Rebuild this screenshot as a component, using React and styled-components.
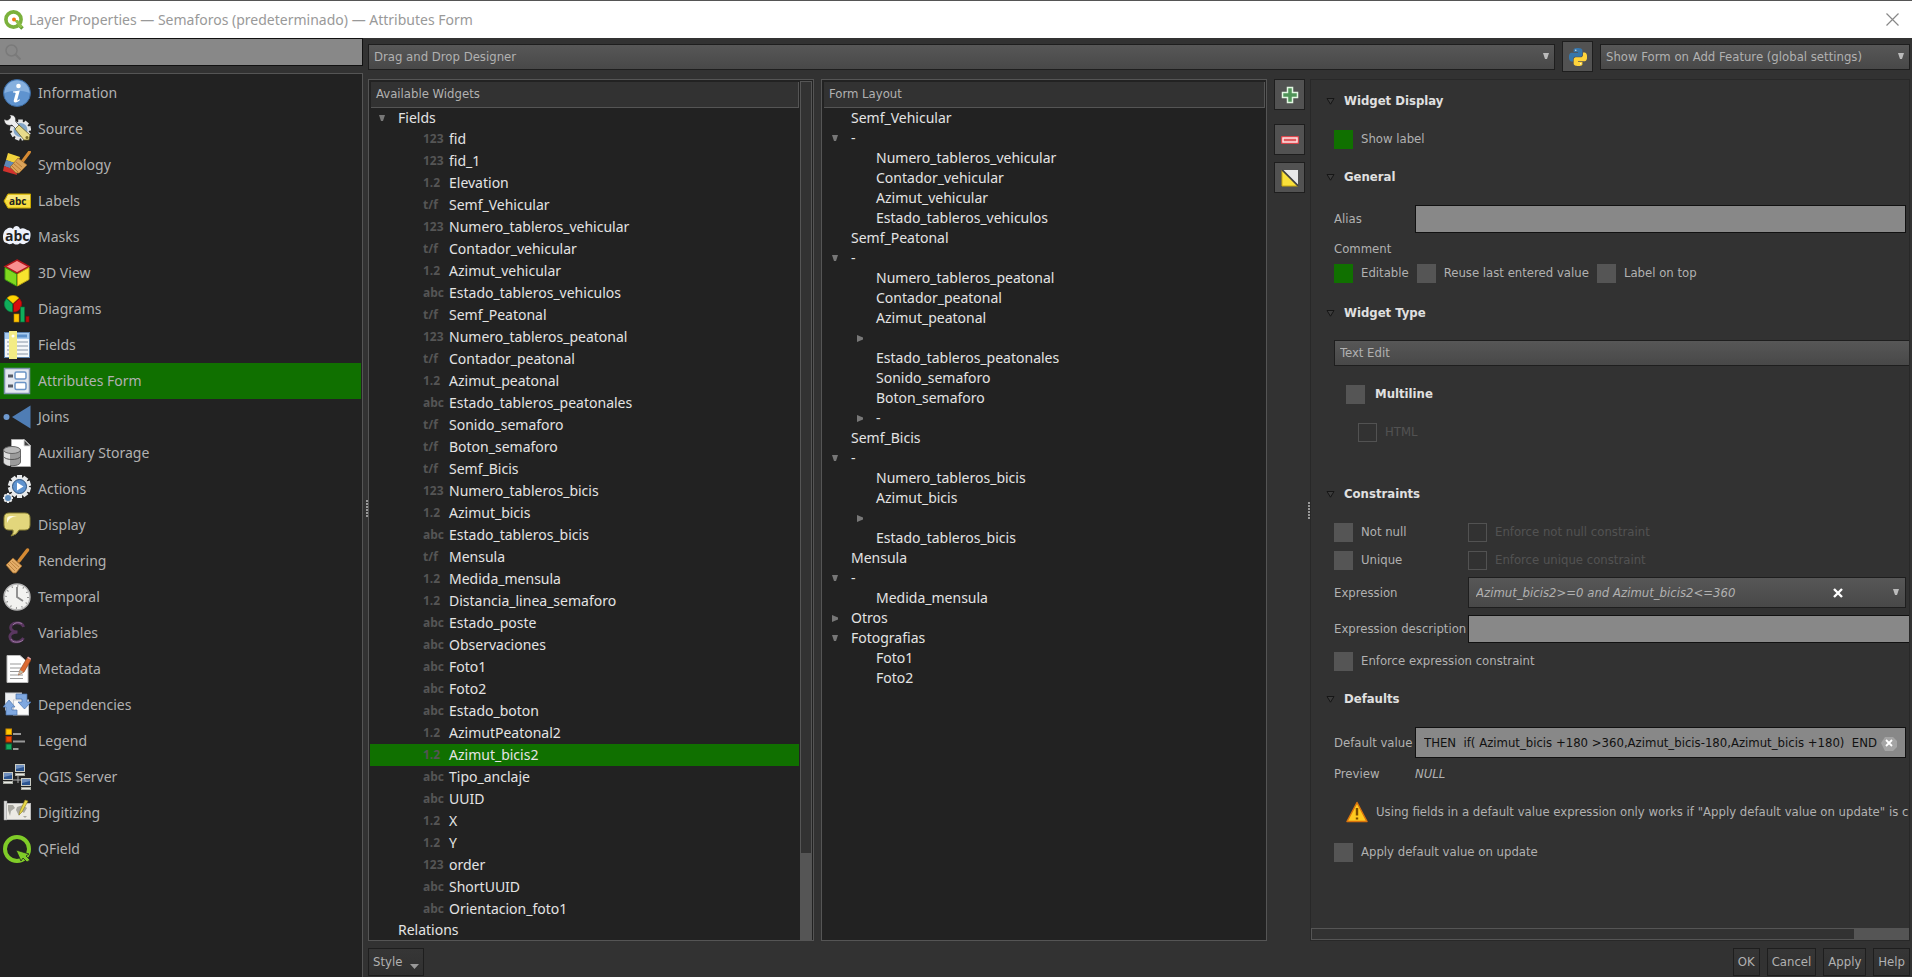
import React from "react";
import styled, { createGlobalStyle, css } from "styled-components";

const UI = `"Noto Sans", "Open Sans", sans-serif`;
const SMALL = `"DejaVu Sans Condensed", "DejaVu Sans", sans-serif`;

const GlobalStyle = createGlobalStyle`
  *, *::before, *::after { box-sizing: border-box; }
  body { margin: 0; background: #323232; }
  button, input, select { font: inherit; color: inherit; margin: 0; border-radius: 0; }
  ul { list-style: none; margin: 0; padding: 0; }
  svg { flex-shrink: 0; }
`;

/* ---------- window frame ---------- */

const Window = styled.div`
  display: flex;
  flex-direction: column;
  min-height: 100vh;
  background: #323232;
  color: #b1b1b1;
  font: 13px/20px ${SMALL};
`;

const TitleBar = styled.header`
  display: flex;
  align-items: center;
  gap: 5px;
  height: 38px;
  padding: 0 12px 0 4px;
  border-top: 1px solid #555;
  background: #fff;
  color: #999;
  font: 14px/20px ${UI};
`;

const Title = styled.h1`
  flex: 1;
  margin: 0;
  font: inherit;
`;

const CloseButton = styled.button`
  display: flex;
  padding: 0;
  border: 0;
  background: none;
`;

const Body = styled.div`
  display: flex;
  flex: 1;
  min-height: 0;
`;

/* ---------- sidebar ---------- */

const Sidebar = styled.aside`
  display: flex;
  flex-direction: column;
  gap: 7px;
  flex: 0 0 363px;
`;

const SearchBox = styled.label`
  display: flex;
  align-items: center;
  height: 28px;
  padding-left: 5px;
  border: 1px solid #111;
  border-left: 0;
  background: #888;
`;

const SearchInput = styled.input`
  flex: 1;
  border: 0;
  outline: 0;
  background: none;
`;

const Nav = styled.nav`
  flex: 1;
  padding-top: 1px;
  padding-right: 1px;
  border: solid #555;
  border-width: 1px 1px 0 0;
  background: #222;
`;

const NavItem = styled.button`
  display: flex;
  align-items: center;
  gap: 7px;
  width: 100%;
  height: 36px;
  padding: 0 3px;
  border: 0;
  background: ${(p) => (p.$active ? "#107000" : "transparent")};
  font: 14px/20px ${UI};
  text-align: left;
`;

const Handle = styled.div`
  display: flex;
  align-items: center;
  justify-content: flex-end;
  flex: 0 0 5px;
  svg { margin-top: 2px; }
`;

/* ---------- main area ---------- */

const Main = styled.main`
  display: flex;
  flex-direction: column;
  flex: 1;
  min-width: 0;
  padding-right: 2px;
`;

const TopBar = styled.div`
  display: flex;
  align-items: center;
  gap: 7px;
  margin: 3px 0 7px;
`;

const comboFace = css`
  border: 1px solid #1e1e1e;
  background: linear-gradient(#575757, #484848);
`;

const ComboWrap = styled.div`
  position: relative;
  display: flex;
  flex: ${(p) => p.$flex || "1"};
  min-width: 0;
  svg {
    position: absolute;
    top: 50%;
    right: 6px;
    margin-top: -4px;
    pointer-events: none;
  }
`;

const SelectBox = styled.select`
  ${comboFace}
  appearance: none;
  width: 100%;
  height: 26px;
  padding: 0 5px;
  ${(p) => p.$cut && css`border-right: 0;`}
`;

const ToolButton = styled.button`
  display: flex;
  align-items: center;
  justify-content: center;
  width: 31px;
  height: 31px;
  padding: 0;
  border: 1px solid #1e1e1e;
  background: #525252;
`;

const Workspace = styled.div`
  display: flex;
  flex: 1;
  min-height: 0;
`;

const Trees = styled.div`
  display: flex;
  gap: 7px;
  flex: 937 1 0;
  min-width: 0;
`;

const TreePanel = styled.section`
  display: flex;
  flex: 1;
  gap: 1px;
  min-width: 0;
  padding: 1px 1px 0;
  border: 1px solid #555;
  background: #222;
`;

const TreeColumn = styled.div`
  flex: 1;
  min-width: 0;
`;

const TreeHeader = styled.h2`
  height: 26px;
  margin: 1px 0 0 1px;
  padding: 0 5px;
  border: solid #555;
  border-width: 0 1px 1px 0;
  background: #323232;
  font: inherit;
  line-height: 24px;
`;

const TreeRow = styled.li`
  display: flex;
  align-items: center;
  height: ${(p) => (p.$type ? 22 : 20)}px;
  padding-left: ${(p) => 9 + p.$level * 25}px;
  background: ${(p) => (p.$selected ? "#107000" : "transparent")};
  color: #e4e4e4;
  font: 14px/20px ${UI};
  white-space: pre;
`;

const Expander = styled.span`
  display: flex;
  width: 19px;
`;

const TypeTag = styled.span`
  width: 26px;
  color: #555;
  font: bold 12px/20px "Open Sans", sans-serif;
`;

const VScroll = styled.div`
  display: flex;
  flex-direction: column;
  justify-content: flex-end;
  width: 12px;
  border: 1px solid #555;
  background: #323232;
`;

const VThumb = styled.div`
  height: 10%;
  background: #555;
`;

const ToolColumn = styled.div`
  display: flex;
  flex-direction: column;
  gap: 7px;
`;

const AddButton = styled(ToolButton)`
  margin-bottom: 7px;
`;

/* ---------- properties ---------- */

const Properties = styled.section`
  display: flex;
  flex-direction: column;
  flex: 598 1 0;
  min-width: 0;
  border: 1px solid #282828;
`;

const Scroller = styled.div`
  flex: 1;
  padding: 11px 0 0 15px;
  overflow: hidden;
`;

const Group = styled.fieldset`
  min-width: 0;
  margin: ${(p) => p.$top || 0}px 0 0;
  padding: 0 0 0 8px;
  border: 0;
`;

const GroupTitle = styled.legend`
  display: flex;
  align-items: center;
  gap: 9px;
  margin-left: -8px;
  padding: 0;
  color: #e0e0e0;
  font-weight: bold;
`;

const Line = styled.div`
  display: flex;
  align-items: center;
  gap: ${(p) => p.$gap || 0}px;
  min-height: ${(p) => p.$h || 28}px;
  margin-top: ${(p) => p.$top || 0}px;
  margin-left: ${(p) => p.$indent || 0}px;
  white-space: nowrap;
`;

const Caption = styled.label`
  flex: 0 0 ${(p) => p.$w}px;
`;

const CheckLabel = styled.label`
  display: flex;
  align-items: center;
  gap: ${(p) => (p.$bold ? 10 : 8)}px;
  width: ${(p) => (p.$w ? `${p.$w}px` : "auto")};
  ${(p) => p.$bold && css`font-weight: bold; color: #e0e0e0;`}
  ${(p) => p.$off && css`color: #525252;`}
`;

const Box = styled.input`
  appearance: none;
  width: 19px;
  height: 19px;
  background: #555;
  &:checked { background: #107000; }
  &:disabled { background: none; border: 1px solid #525252; }
`;

const Field = styled.input`
  flex: 1;
  min-width: 0;
  height: 28px;
  margin-right: ${(p) => (p.$cut ? 0 : 3)}px;
  padding: 0 5px;
  border: 1px solid #111;
  ${(p) => p.$cut && css`border-right: 0;`}
  outline: 0;
  background: #888;
`;

const ExprCombo = styled.div`
  ${comboFace}
  display: flex;
  align-items: center;
  flex: 1;
  height: 31px;
  margin-right: 3px;
  padding: 0 6px 0 7px;
`;

const ExprInput = styled.input`
  flex: 1;
  min-width: 0;
  padding: 0;
  border: 0;
  outline: 0;
  background: none;
  font-style: italic;
`;

const IconButton = styled.button`
  display: flex;
  margin-right: ${(p) => p.$mr || 0}px;
  padding: 0;
  border: 0;
  background: none;
`;

const ValueBox = styled.div`
  display: flex;
  align-items: center;
  flex: 1;
  min-width: 0;
  height: 31px;
  margin-right: 3px;
  padding: 0 8px;
  border: 1px solid #111;
  background: #888;
  color: #111;
`;

const ValueInput = styled(ExprInput)`
  font-style: normal;
`;

const HScroll = styled.div`
  display: flex;
  justify-content: flex-end;
  height: 12px;
  border: 1px solid #555;
`;

const HThumb = styled.div`
  width: 9%;
  background: #555;
`;

/* ---------- footer ---------- */

const Footer = styled.footer`
  display: flex;
  gap: 7px;
  margin: 7px 0 1px;
`;

const PushButton = styled.button`
  display: flex;
  align-items: center;
  gap: 8px;
  height: 28px;
  padding: 0 4px;
  border: 1px solid #1e1e1e;
  background: linear-gradient(#363636, #303030);
  svg { margin-top: 8px; }
`;

const Spacer = styled.div`
  flex: 1;
`;

/* ---------- drawings ---------- */

const Icon = ({ size = 28, box = 28, children }) => (
  <svg width={size} height={size} viewBox={`0 0 ${box} ${box}`} aria-hidden="true">
    {children}
  </svg>
);

const Down = ({ color = "#888" }) => (
  <svg width="6" height="7" viewBox="0 0 6 7" aria-hidden="true">
    <path d="M0 0h6L4 6H2z" fill={color} />
  </svg>
);

const Right = () => (
  <svg width="6" height="7" viewBox="0 0 6 7" aria-hidden="true">
    <path d="M0 0L6 2.500v2L0 7z" fill="#777" />
  </svg>
);

const GroupArrow = () => (
  <svg width="9" height="7" viewBox="0 0 9 7" aria-hidden="true">
    <path d="M1 .5h7L4.500 6.200z" fill="#3c3c3c" stroke="#161616" />
  </svg>
);

const Grip = () => (
  <svg width="2" height="18" viewBox="0 0 2 18" aria-hidden="true">
    <path d="M1 0v18" stroke="#999" strokeWidth="2" strokeDasharray="2 1" />
  </svg>
);

const Cross = ({ size, color, width }) => (
  <svg width={size} height={size} viewBox="0 0 10 10" aria-hidden="true">
    <path d="M1 1l8 8M9 1l-8 8" stroke={color} strokeWidth={width} />
  </svg>
);

const gear = (cx, cy, r, fill, teeth = 9) => (
  <g fill={fill}>
    {Array.from({ length: teeth }, (_, i) => (
      <rect
        key={i}
        x={cx - r * 0.22}
        y={cy - r}
        width={r * 0.44}
        height={r}
        transform={`rotate(${(360 / teeth) * i} ${cx} ${cy})`}
      />
    ))}
    <circle cx={cx} cy={cy} r={r * 0.82} />
  </g>
);

const monitor = (x, y) => (
  <g>
    <rect x={x} y={y} width="10" height="8" fill="#c9ccc4" />
    <rect x={x + 1} y={y + 1} width="8" height="6" fill="#2c5591" />
    <path d={`M${x + 1} ${y + 1}h8v2l-8 2z`} fill="#6f8fbe" />
    <rect x={x} y={y + 9} width="10" height="3" fill="#a9aca4" />
    <rect x={x + 1} y={y + 10} width="8" height="1" fill="#e8e8e4" />
  </g>
);

const icons = {
  info: (
    <Icon>
      <circle cx="14" cy="14" r="13.500" fill="#5f93cf" stroke="#3c699e" />
      <path d="M1.500 14a12.500 12.500 0 0 1 25 0c-7-3-17-3-25 0z" fill="#86b0df" />
      <circle cx="15.500" cy="7" r="2.300" fill="#fff" />
      <path d="M10 12.500l6.800-1-2.600 9.400c-.2.900.8.700 2.300-.6l.5.700c-2.500 2.900-6.900 3.700-6.200.3l1.900-7.100c0-.6-.9-.7-2.700-.8z" fill="#fff" />
    </Icon>
  ),
  source: (
    <Icon>
      {gear(17.5, 15, 10.5, "#e4e6e8")}
      <circle cx="17.500" cy="15" r="7" fill="#83a6c9" />
      <path d="M1 4c2 1.500 4 1.500 5.500 0S8 .8 6 0c5-.8 7.500 2.500 6.500 6.500L17 11l-3.500 3.500L9 10C5 11.500 1 9 1 4z" fill="#eee" stroke="#222" strokeWidth=".6" />
      <path d="M12 14l4-4 11 10-1 5-5 0z" fill="#e9dc8b" stroke="#554d1a" strokeWidth=".7" />
      <circle cx="24" cy="22.500" r="1.500" fill="#7a6d26" />
    </Icon>
  ),
  symbology: (
    <Icon>
      <path d="M5 2l12 4-3 7L3 9z" fill="#f2d33c" />
      <path d="M3 9l12 4-2 7L1 15z" fill="#5f88b8" />
      <path d="M1 15l12 4 1 5L0 20z" fill="#d2322d" />
      <path d="M26.500 1L19 11" stroke="#d58a33" strokeWidth="3" strokeLinecap="round" />
      <path d="M15 7l9 7-2 2-6 6-3 0-6-6 3-3z" fill="#dba35a" stroke="#9a6526" strokeWidth=".7" />
      <path d="M9 15l6 6M11 13l7 6M13 11l6 5" stroke="#b97c35" />
    </Icon>
  ),
  labels: (
    <Icon>
      <path d="M1 14l4-7h22.500v14H5z" fill="#f6dc3e" stroke="#c9a800" />
      <path d="M5 8h22v5H3z" fill="#fae97f" />
      <text x="6" y="17.500" fontFamily="Open Sans, sans-serif" fontWeight="bold" fontSize="10" fill="#222">abc</text>
    </Icon>
  ),
  masks: (
    <Icon>
      <path d="M4 6c2-2 5-1 6 0 1-4 6-4 7 0 3-2 6 0 7 1 3 0 4 3 3.500 6S26 20 23 20c-2 2-5 1-6 0-2 2-5 2-7 0-3 2-5 1-6 0-3 0-4-3-4-6s1-7 4-8z" fill="#eef2fb" />
      <text x="2" y="18" fontFamily="Open Sans, sans-serif" fontWeight="bold" fontSize="14" fill="#222">abc</text>
    </Icon>
  ),
  view3d: (
    <Icon>
      <path d="M14 1l12 6.500L14 14 2 7.500z" fill="#f98f8f" stroke="#b3161b" strokeWidth="1.500" />
      <path d="M2 8.500L13.500 15v12L2 20.500z" fill="#7fd81f" stroke="#3d9b10" />
      <path d="M26 8.500L14.500 15v12L26 20.500z" fill="#f7e42e" stroke="#b9a416" />
    </Icon>
  ),
  diagrams: (
    <Icon>
      <path d="M10 8.500L4 3a8 8 0 0 1 12 0z" fill="#ffd500" stroke="#b88600" strokeWidth=".6" />
      <path d="M9.500 9L3.500 3.500A8 8 0 0 0 9.500 17z" fill="#0fae5b" stroke="#08713a" strokeWidth=".6" />
      <path d="M10.500 9l6-5.500A8 8 0 0 1 10.500 17z" fill="#d80d0d" stroke="#8f0505" strokeWidth=".6" />
      <rect x="11" y="19" width="5" height="8" fill="#ffc400" stroke="#b88600" strokeWidth=".6" />
      <rect x="17.500" y="12" width="4" height="15" fill="#0fae5b" stroke="#08713a" strokeWidth=".6" />
      <rect x="23" y="21.500" width="3" height="5.500" fill="#b80d0d" stroke="#8f0505" strokeWidth=".6" />
    </Icon>
  ),
  fields: (
    <Icon>
      <rect x="1.500" y="1.500" width="25" height="25" fill="#f5f7fa" stroke="#5d82ad" />
      <rect x="2" y="2" width="24" height="6" fill="#a8cbef" />
      <path d="M14 5h10" stroke="#5a8fca" strokeWidth="3" />
      <path d="M4 11h21M4 15h21M4 19h21M4 23h21" stroke="#8794a5" />
      <rect x="6" y="0" width="8" height="28" fill="#f3ec85" />
      <circle cx="10" cy="5" r="1.500" fill="#fff" />
    </Icon>
  ),
  form: (
    <Icon>
      <rect x="1.500" y="1.500" width="25" height="25" fill="#e3e8ef" stroke="#7f93ad" strokeWidth="1.500" />
      <path d="M5 9h5M5 19h5" stroke="#555b66" strokeWidth="3" />
      <rect x="12" y="5" width="11" height="7" rx="1.500" fill="#fff" stroke="#6c95c6" strokeWidth="1.500" />
      <rect x="12" y="15.500" width="11" height="7" rx="1.500" fill="#fff" stroke="#6c95c6" strokeWidth="1.500" />
    </Icon>
  ),
  joins: (
    <Icon>
      <circle cx="3.500" cy="14" r="3" fill="#6f9ad0" />
      <path d="M9 14L27.500 2.500v23z" fill="#4f7db4" />
    </Icon>
  ),
  storage: (
    <Icon>
      <path d="M8.500.500H21l6.500 6.500v20.500h-19z" fill="#fff" stroke="#aaa" />
      <path d="M21 .5V7h6.500z" fill="#444" stroke="#ddd" />
      <path d="M.5 11v12c0 5 17 5 17 0V11z" fill="#9b9b9b" stroke="#666" />
      <path d="M1 12v11c0 3 6 4 6 4V14z" fill="#ddd" />
      <ellipse cx="9" cy="11" rx="8.500" ry="3.500" fill="#b9b9b9" stroke="#666" />
      <path d="M.5 17.500c2 4 15 4 17 0" fill="none" stroke="#555" />
    </Icon>
  ),
  actions: (
    <Icon>
      {gear(16.5, 11.5, 11.5, "#e8eaec", 10)}
      <circle cx="16.500" cy="11.500" r="7" fill="#5f93cf" stroke="#2e5480" />
      <path d="M14 7.500v8l6.500-4z" fill="#fff" />
      {gear(5, 23, 5, "#e8eaec", 8)}
      <circle cx="5" cy="23" r="3" fill="#5f8fbf" />
    </Icon>
  ),
  display: (
    <Icon>
      <path d="M6 2h16q5 0 5 5v7q0 5-5 5h-6q-2 5-8 6 3-3 2-6H6q-5 0-5-5V7q0-5 5-5z" fill="#e2d67c" stroke="#8d8335" />
      <path d="M4 12V8q0-3 4-3h6q-8 1-10 7z" fill="#fffbe0" />
    </Icon>
  ),
  rendering: (
    <Icon>
      <path d="M24.500 3L16 14" stroke="#d58a33" strokeWidth="3.500" strokeLinecap="round" />
      <path d="M10 11l9 8-2 2-4 5-3 0-7-8 5-5z" fill="#e3ad68" stroke="#9a6526" strokeWidth=".8" />
      <path d="M5 17l7 7M7 15l7 7M9 14l7 6" stroke="#bf8440" />
    </Icon>
  ),
  temporal: (
    <Icon>
      <circle cx="14" cy="14" r="13" fill="#f2f2f0" stroke="#b5b5b5" strokeWidth="1.500" />
      <circle cx="14" cy="14" r="11" fill="none" stroke="#777" strokeWidth="1.500" strokeDasharray="1 4.760" />
      <path d="M14 4v10l6 4" fill="none" stroke="#888" strokeWidth="1.800" />
    </Icon>
  ),
  variables: (
    <Icon>
      <path d="M20.500 8c-1-5-9-5-12-2-2.500 4 1 7 6 7-6 0-9 3-7 7s10 4 13-1" fill="none" stroke="#5a3760" strokeWidth="2.800" />
      <path d="M19 5c-2-2-7-2-9 1M8 20c1 4 9 4 12 1" fill="none" stroke="#9b78a0" />
    </Icon>
  ),
  metadata: (
    <Icon>
      <path d="M4 .5h13l8 7v20H4z" fill="#fff" stroke="#bbb" />
      <path d="M7 9h11M7 13h11M7 16.500h9M7 20h13M7 23.500h13" stroke="#999" />
      <path d="M15.500 20l1.500-5 7-12 4 2-7 12z" fill="#dc6a32" stroke="#8b3d15" strokeWidth=".6" />
      <path d="M15.500 20l1.500-5 3.500 2z" fill="#bba" />
      <path d="M24 3l1-1.500 3 2-.5 1.500z" fill="#e9a0a0" />
    </Icon>
  ),
  dependencies: (
    <Icon>
      <rect x="2.500" y="2" width="16" height="17" fill="#eef0f2" stroke="#c9ccd0" />
      <rect x="10.500" y="9" width="15" height="15" fill="#fafafa" stroke="#c9ccd0" />
      <path d="M13 3h11v8h4l-6.500 7L15 11h4V8h-6z" fill="#7fa8e0" stroke="#4a74ad" strokeWidth=".7" />
      <path d="M14 24H3v-8H0l6-7 6 7H9v3h5z" fill="#7fa8e0" stroke="#4a74ad" strokeWidth=".7" />
    </Icon>
  ),
  legend: (
    <Icon>
      <rect x="3" y="2" width="5.500" height="5.500" fill="#ffc800" stroke="#d18f00" />
      <rect x="3" y="9.500" width="5.500" height="5.500" fill="#f04a00" stroke="#a82f00" />
      <rect x="3" y="17" width="5.500" height="5.500" fill="#14a85f" stroke="#0a6b3a" />
      <path d="M10 7h8M10 14.500h12M10 22h5.500" stroke="#999" strokeWidth="2" />
    </Icon>
  ),
  server: (
    <Icon>
      <path d="M15 12v4M9 17h12M15 16v4" stroke="#aaa" />
      {monitor(12, 1)}
      {monitor(0, 9)}
      {monitor(18, 15)}
    </Icon>
  ),
  digitizing: (
    <Icon>
      <path d="M1 2h3v19H1z" fill="#ddd" stroke="#999" strokeWidth=".5" />
      <rect x="3.500" y="4.500" width="24" height="16" fill="#eceae4" stroke="#bbb" />
      <path d="M5 6l5 0 2 3-4 3-1 5-2-6zM14 8l6-2 4 3-3 5-3-2-2 5-3-6zM20 17l4 0-2 2z" fill="#a8a79f" />
      <path d="M16 16l1-4L22 1l3 1-6 11z" fill="#e8d84a" stroke="#8d7f1a" strokeWidth=".6" />
    </Icon>
  ),
  qfield: (
    <Icon>
      <circle cx="14" cy="14" r="12" fill="none" stroke="#80cc28" strokeWidth="4" />
      <path d="M13 15l13 4-3 2 4 4-3 2-4-4-2 3z" fill="#80cc28" stroke="#222" strokeWidth=".8" />
    </Icon>
  ),
};

const QgisLogo = () => (
  <Icon size={20} box={20}>
    <path d="M13.500 13.500l5 5" stroke="#5f9a33" strokeWidth="3.500" />
    <circle cx="9.500" cy="9.500" r="7.600" fill="none" stroke="#7bb13c" strokeWidth="3.600" />
    <path d="M10 10h4l5 7-3 1z" fill="#8fc048" />
    <circle cx="10" cy="9.500" r="2" fill="#ee7913" />
  </Icon>
);

const PythonLogo = () => (
  <Icon size={18} box={24}>
    <path
      fill="#3776ab"
      d="M14.250.18l.9.2.73.26.59.3.45.32.34.34.25.34.16.33.1.3.04.26.02.2-.01.13V8.500l-.05.63-.13.55-.21.46-.26.38-.3.31-.33.25-.35.19-.35.14-.33.1-.3.07-.26.04-.21.02H8.770l-.69.05-.59.14-.5.22-.41.27-.33.32-.27.35-.2.36-.15.37-.1.35-.07.32-.04.27-.02.21v3.060H3.170l-.21-.03-.28-.07-.32-.12-.35-.18-.36-.26-.36-.36-.35-.46-.32-.59-.28-.73-.21-.88-.14-1.050-.05-1.230.06-1.220.16-1.040.24-.87.32-.71.36-.57.4-.44.42-.33.42-.24.4-.16.36-.1.32-.05.24-.01h.16l.06.01h8.160v-.83H6.180l-.01-2.750-.02-.37.05-.34.11-.31.17-.28.25-.26.31-.23.38-.2.44-.18.51-.15.58-.12.64-.1.71-.06.77-.04.84-.02 1.270.05z"
    />
    <path
      fill="#ffd43b"
      d="M21.100 6.110l.28.06.32.12.35.18.36.27.36.35.35.47.32.59.28.73.21.88.14 1.040.05 1.230-.06 1.230-.16 1.040-.24.86-.32.71-.36.57-.4.45-.42.33-.42.24-.4.16-.36.09-.32.05-.24.02-.16-.01h-8.220v.82h5.840l.01 2.760.02.36-.05.34-.11.31-.17.29-.25.25-.31.24-.38.2-.44.17-.51.15-.58.13-.64.09-.71.07-.77.04-.84.01-1.270-.04-1.070-.14-.9-.2-.73-.25-.59-.3-.45-.33-.34-.34-.25-.34-.16-.33-.1-.3-.04-.25-.02-.2.01-.13v-5.340l.05-.64.13-.54.21-.46.26-.38.3-.32.33-.24.35-.2.35-.14.33-.1.3-.06.26-.04.21-.02.13-.01h5.840l.69-.05.59-.14.5-.21.41-.28.33-.32.27-.35.2-.36.15-.36.1-.35.07-.32.04-.28.02-.21V6.070h2.090l.14.01z"
    />
    <circle cx="9" cy="3" r="1" fill="#dfe8f0" />
    <circle cx="15.500" cy="21" r="1" fill="#fffbe6" />
  </Icon>
);

/* ---------- data ---------- */

const sections = [
  ["Information", "info"], ["Source", "source"], ["Symbology", "symbology"],
  ["Labels", "labels"], ["Masks", "masks"], ["3D View", "view3d"],
  ["Diagrams", "diagrams"], ["Fields", "fields"], ["Attributes Form", "form"],
  ["Joins", "joins"], ["Auxiliary Storage", "storage"], ["Actions", "actions"],
  ["Display", "display"], ["Rendering", "rendering"], ["Temporal", "temporal"],
  ["Variables", "variables"], ["Metadata", "metadata"],
  ["Dependencies", "dependencies"], ["Legend", "legend"],
  ["QGIS Server", "server"], ["Digitizing", "digitizing"], ["QField", "qfield"],
];

const fields = [
  ["123", "fid"], ["123", "fid_1"], ["1.2", "Elevation"],
  ["t/f", "Semf_Vehicular"], ["123", "Numero_tableros_vehicular"],
  ["t/f", "Contador_vehicular"], ["1.2", "Azimut_vehicular"],
  ["abc", "Estado_tableros_vehiculos"], ["t/f", "Semf_Peatonal"],
  ["123", "Numero_tableros_peatonal"], ["t/f", "Contador_peatonal"],
  ["1.2", "Azimut_peatonal"], ["abc", "Estado_tableros_peatonales"],
  ["t/f", "Sonido_semaforo"], ["t/f", "Boton_semaforo"], ["t/f", "Semf_Bicis"],
  ["123", "Numero_tableros_bicis"], ["1.2", "Azimut_bicis"],
  ["abc", "Estado_tableros_bicis"], ["t/f", "Mensula"],
  ["1.2", "Medida_mensula"], ["1.2", "Distancia_linea_semaforo"],
  ["abc", "Estado_poste"], ["abc", "Observaciones"], ["abc", "Foto1"],
  ["abc", "Foto2"], ["abc", "Estado_boton"], ["1.2", "AzimutPeatonal2"],
  ["1.2", "Azimut_bicis2"], ["abc", "Tipo_anclaje"], ["abc", "UUID"],
  ["1.2", "X"], ["1.2", "Y"], ["123", "order"], ["abc", "ShortUUID"],
  ["abc", "Orientacion_foto1"],
];

const layout = [
  [0, "", "Semf_Vehicular"], [0, "open", "-"],
  [1, "", "Numero_tableros_vehicular"], [1, "", "Contador_vehicular"],
  [1, "", "Azimut_vehicular"], [1, "", "Estado_tableros_vehiculos"],
  [0, "", "Semf_Peatonal"], [0, "open", "-"],
  [1, "", "Numero_tableros_peatonal"], [1, "", "Contador_peatonal"],
  [1, "", "Azimut_peatonal"], [1, "closed", ""],
  [1, "", "Estado_tableros_peatonales"], [1, "", "Sonido_semaforo"],
  [1, "", "Boton_semaforo"], [1, "closed", "-"],
  [0, "", "Semf_Bicis"], [0, "open", "-"],
  [1, "", "Numero_tableros_bicis"], [1, "", "Azimut_bicis"],
  [1, "closed", ""], [1, "", "Estado_tableros_bicis"],
  [0, "", "Mensula"], [0, "open", "-"], [1, "", "Medida_mensula"],
  [0, "closed", "Otros"], [0, "open", "Fotografias"],
  [1, "", "Foto1"], [1, "", "Foto2"],
];

/* ---------- pieces ---------- */

const TreeItem = ({ level = 0, state = "", type, selected, children }) => (
  <TreeRow $level={level} $type={type} $selected={selected}>
    <Expander>
      {state === "open" && <Down color="#777" />}
      {state === "closed" && <Right />}
    </Expander>
    {type && <TypeTag>{type}</TypeTag>}
    {children}
  </TreeRow>
);

const Combo = ({ label, value, flex, cut }) => (
  <ComboWrap $flex={flex}>
    <SelectBox aria-label={label} $cut={cut}>
      <option>{value}</option>
    </SelectBox>
    {!cut && <Down color="#bbb" />}
  </ComboWrap>
);

const Check = ({ children, checked, off, bold, width }) => (
  <CheckLabel $off={off} $bold={bold} $w={width}>
    <Box type="checkbox" defaultChecked={checked} disabled={off} />
    {children}
  </CheckLabel>
);

const Heading = ({ children }) => (
  <GroupTitle>
    <GroupArrow />
    {children}
  </GroupTitle>
);

export default function App() {
  return (
    <>
      <GlobalStyle />
      <Window>
        <TitleBar>
          <QgisLogo />
          <Title>Layer Properties — Semaforos (predeterminado) — Attributes Form</Title>
          <CloseButton aria-label="Close">
            <Cross size={15} color="#888" width={0.8} />
          </CloseButton>
        </TitleBar>
        <Body>
          <Sidebar>
            <SearchBox>
              <Icon size={16} box={16}>
                <circle cx="6.500" cy="6.500" r="5.500" fill="none" stroke="#7a7a7a" strokeWidth="1.500" />
                <path d="M10.500 10.500l5 5" stroke="#7a7a7a" strokeWidth="2" />
              </Icon>
              <SearchInput aria-label="Search" />
            </SearchBox>
            <Nav>
              {sections.map(([name, icon]) => (
                <NavItem key={name} $active={name === "Attributes Form"}>
                  {icons[icon]}
                  {name}
                </NavItem>
              ))}
            </Nav>
          </Sidebar>
          <Handle>
            <Grip />
          </Handle>
          <Main>
            <TopBar>
              <Combo label="Form designer" value="Drag and Drop Designer" />
              <ToolButton aria-label="Python init function">
                <PythonLogo />
              </ToolButton>
              <Combo label="Form on add feature" value="Show Form on Add Feature (global settings)" flex="0 0 310px" />
            </TopBar>
            <Workspace>
              <Trees>
                <TreePanel>
                  <TreeColumn>
                    <TreeHeader>Available Widgets</TreeHeader>
                    <ul>
                      <TreeItem state="open">Fields</TreeItem>
                      {fields.map(([type, name]) => (
                        <TreeItem key={name} level={1} type={type} selected={name === "Azimut_bicis2"}>
                          {name}
                        </TreeItem>
                      ))}
                      <TreeItem>Relations</TreeItem>
                    </ul>
                  </TreeColumn>
                  <VScroll>
                    <VThumb />
                  </VScroll>
                </TreePanel>
                <TreePanel>
                  <TreeColumn>
                    <TreeHeader>Form Layout</TreeHeader>
                    <ul>
                      {layout.map(([level, state, name], i) => (
                        <TreeItem key={i} level={level} state={state}>
                          {name}
                        </TreeItem>
                      ))}
                    </ul>
                  </TreeColumn>
                </TreePanel>
                <ToolColumn>
                  <AddButton aria-label="Add">
                    <Icon size={18} box={18}>
                      <path d="M6.500 1.500h5v5h5v5h-5v5h-5v-5h-5v-5h5z" fill="#4f9458" stroke="#e2f7e2" strokeWidth="1.500" />
                    </Icon>
                  </AddButton>
                  <ToolButton aria-label="Remove">
                    <Icon size={18} box={18}>
                      <rect x="0" y="5" width="18" height="8" rx="1" fill="#d9464c" />
                      <rect x="2" y="7" width="14" height="4" fill="#e0595e" stroke="#ffe3e3" strokeWidth="1.500" />
                    </Icon>
                  </ToolButton>
                  <ToolButton aria-label="Invert selection">
                    <Icon size={18} box={18}>
                      <path d="M1 1v16h16z" fill="#fbe13a" stroke="#c9a90c" />
                      <path d="M2.500 1H17v14.500z" fill="#e8e8e8" />
                      <path d="M1 1l16 16" stroke="#444" strokeWidth="1.500" />
                    </Icon>
                  </ToolButton>
                </ToolColumn>
              </Trees>
              <Handle>
                <Grip />
              </Handle>
              <Properties>
                <Scroller>
                  <Group>
                    <Heading>Widget Display</Heading>
                    <Line $top={14}>
                      <Check checked>Show label</Check>
                    </Line>
                  </Group>
                  <Group $top={14}>
                    <Heading>General</Heading>
                    <Line $top={18}>
                      <Caption $w={81} htmlFor="alias">Alias</Caption>
                      <Field id="alias" />
                    </Line>
                    <Line $h={20} $top={6}>Comment</Line>
                    <Line $gap={8}>
                      <Check checked>Editable</Check>
                      <Check>Reuse last entered value</Check>
                      <Check>Label on top</Check>
                    </Line>
                  </Group>
                  <Group $top={16}>
                    <Heading>Widget Type</Heading>
                    <Line $h={26} $top={17}>
                      <Combo label="Widget type" value="Text Edit" cut />
                    </Line>
                    <Line $top={14} $indent={12}>
                      <Check bold>Multiline</Check>
                    </Line>
                    <Line $top={10} $indent={24}>
                      <Check off>HTML</Check>
                    </Line>
                  </Group>
                  <Group $top={38}>
                    <Heading>Constraints</Heading>
                    <Line $top={14}>
                      <Check width={134}>Not null</Check>
                      <Check off>Enforce not null constraint</Check>
                    </Line>
                    <Line>
                      <Check width={134}>Unique</Check>
                      <Check off>Enforce unique constraint</Check>
                    </Line>
                    <Line $h={31} $top={3}>
                      <Caption $w={134} htmlFor="expression">Expression</Caption>
                      <ExprCombo>
                        <ExprInput id="expression" defaultValue="Azimut_bicis2>=0 and Azimut_bicis2<=360" />
                        <IconButton aria-label="Clear expression" $mr={50}>
                          <Cross size={10} color="#fff" width={2.4} />
                        </IconButton>
                        <Down color="#bbb" />
                      </ExprCombo>
                    </Line>
                    <Line $top={7}>
                      <Caption $w={134} htmlFor="description">Expression description</Caption>
                      <Field id="description" $cut />
                    </Line>
                    <Line $top={4}>
                      <Check>Enforce expression constraint</Check>
                    </Line>
                  </Group>
                  <Group $top={14}>
                    <Heading>Defaults</Heading>
                    <Line $h={31} $top={18}>
                      <Caption $w={81} htmlFor="default">Default value</Caption>
                      <ValueBox>
                        <ValueInput
                          id="default"
                          defaultValue="THEN  if( Azimut_bicis +180 >360,Azimut_bicis-180,Azimut_bicis +180)  END"
                        />
                        <IconButton aria-label="Clear default value">
                          <Icon size={16} box={16}>
                            <path d="M0 8l4-6h8l4 4v6l-4 4H4z" fill="#a4a4a4" />
                            <path d="M5 5l6 6M11 5l-6 6" stroke="#fff" strokeWidth="1.800" />
                          </Icon>
                        </IconButton>
                      </ValueBox>
                    </Line>
                    <Line $h={20} $top={6}>
                      <Caption as="span" $w={81}>Preview</Caption>
                      <em>NULL</em>
                    </Line>
                    <Line $top={14} $indent={12} $gap={8}>
                      <Icon size={22} box={22}>
                        <path d="M11 1.500L21 20.500H1z" fill="#ffc91f" stroke="#d9730d" strokeWidth="1.500" strokeLinejoin="round" />
                        <path d="M11 7v7.500M11 16.500v2" stroke="#7a4a00" strokeWidth="2.400" />
                      </Icon>
                      Using fields in a default value expression only works if "Apply default value on update" is checked
                    </Line>
                    <Line $top={12}>
                      <Check>Apply default value on update</Check>
                    </Line>
                  </Group>
                </Scroller>
                <HScroll>
                  <HThumb />
                </HScroll>
              </Properties>
            </Workspace>
            <Footer>
              <PushButton>
                Style
                <svg width="9" height="5" viewBox="0 0 9 5" aria-hidden="true">
                  <path d="M0 0h9L4.500 5z" fill="#999" />
                </svg>
              </PushButton>
              <Spacer />
              <PushButton>OK</PushButton>
              <PushButton>Cancel</PushButton>
              <PushButton>Apply</PushButton>
              <PushButton>Help</PushButton>
            </Footer>
          </Main>
        </Body>
      </Window>
    </>
  );
}
